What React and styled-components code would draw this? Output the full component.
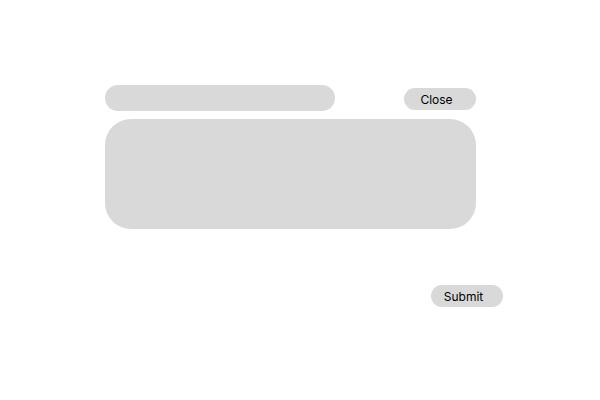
import React from 'react'
import styled, { createGlobalStyle } from 'styled-components'

const Global = createGlobalStyle`
  body {
    margin: 0;
    background: #ffffff;
    font-family: Inter, "Liberation Sans", sans-serif;
  }
`

const Page = styled.div`
  width: 600px;
  height: 400px;
  padding: 85px 0 0 105px;
  box-sizing: border-box;
`

const Panel = styled.div`
  width: 371px;
  display: flex;
  flex-direction: column;
  gap: 8px;
`

const Header = styled.div`
  display: flex;
  align-items: flex-start;
  justify-content: space-between;
`

const TitleBar = styled.div`
  width: 230px;
  height: 26px;
  border-radius: 13px;
  background-color: #d9d9d9;
`

const Body = styled.div`
  height: 110px;
  border-radius: 26px;
  background-color: #d9d9d9;
`

const Footer = styled.div`
  width: 398px;
  display: flex;
  justify-content: flex-end;
  margin-top: 56px;
`

const Btn = styled.button`
  width: 72px;
  height: 22px;
  border: none;
  border-radius: 11px;
  background-color: #d9d9d9;
  color: #000;
  font-family: Inter, "Liberation Sans", sans-serif;
  font-size: 12px;
  padding: 0 7px 0 0;
  margin-top: ${p => p.$offset || 0}px;
`

const App = () => {
  return (
    <>
      <Global />
      <Page>
        <Panel>
          <Header>
            <TitleBar />
            <Btn $offset={3}>Close</Btn>
          </Header>
          <Body />
        </Panel>
        <Footer>
          <Btn>Submit</Btn>
        </Footer>
      </Page>
    </>
  )
}

export default App
